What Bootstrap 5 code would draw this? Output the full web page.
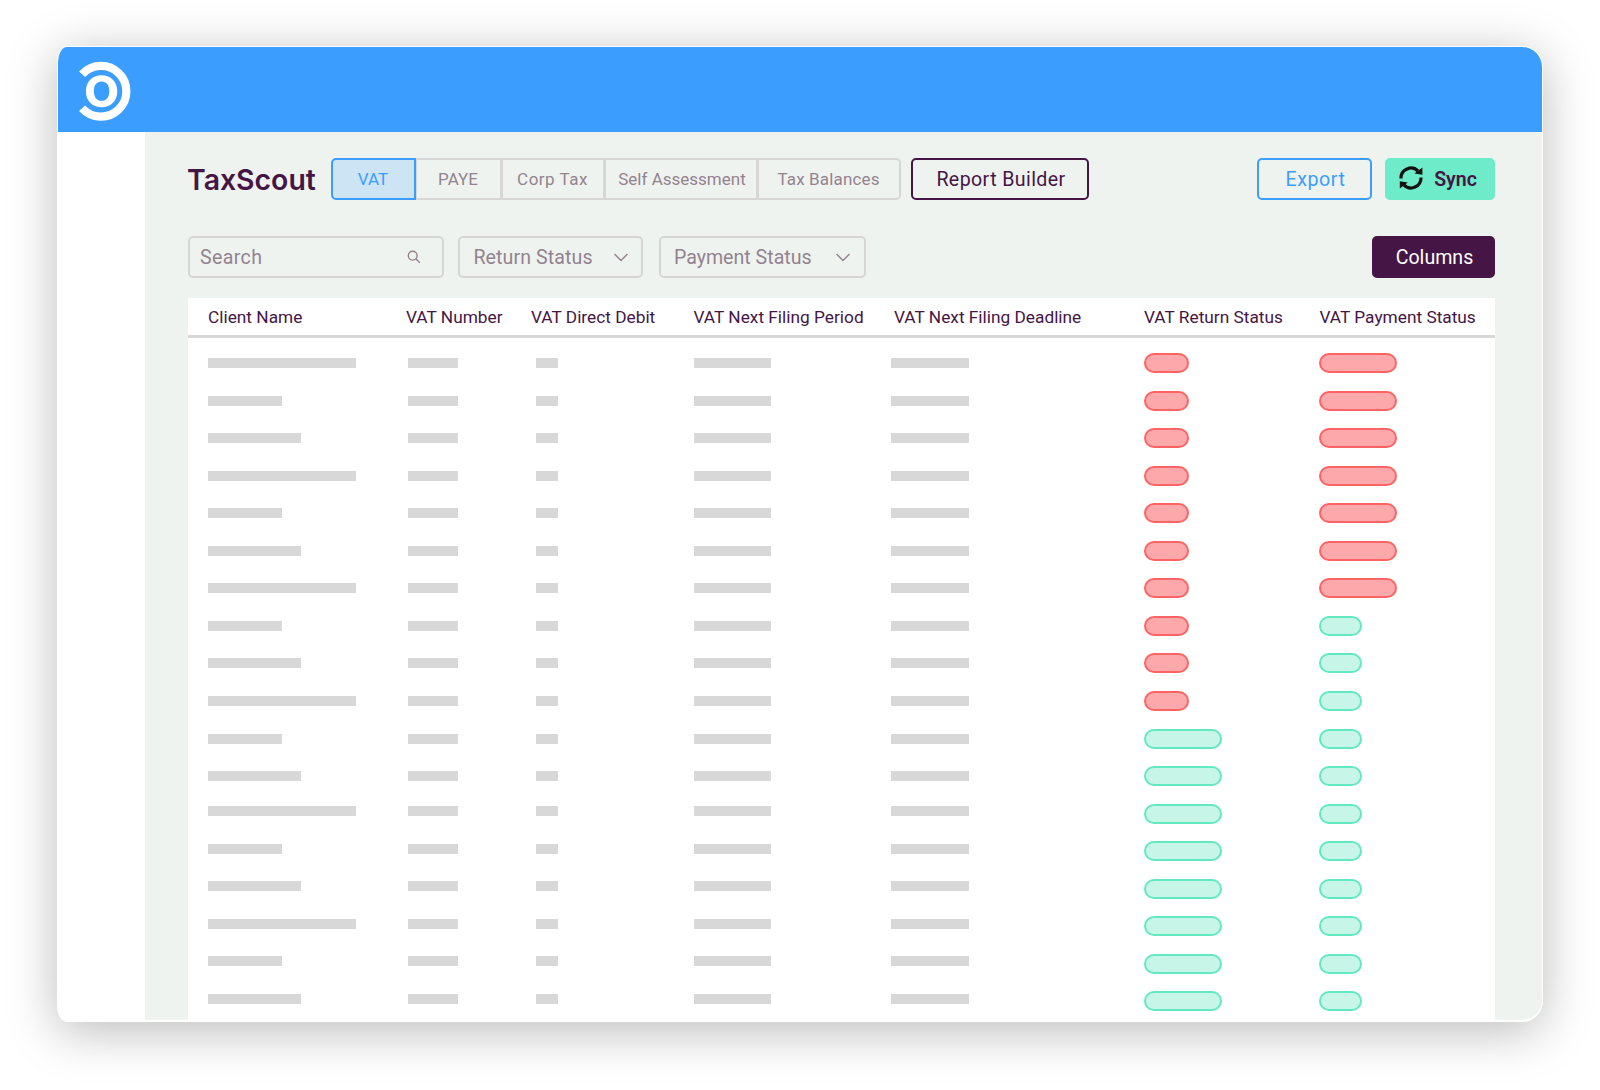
<!DOCTYPE html>
<html lang="en">
<head>
  <meta charset="UTF-8" />
  <meta name="viewport" content="width=device-width, initial-scale=1.0" />
  <title>TaxScout – VAT</title>
  <link href="https://cdn.jsdelivr.net/npm/bootstrap@5.3.3/dist/css/bootstrap.min.css" rel="stylesheet" />

  <style>
    body {
      background: #fff;
      font-family: Roboto, "Liberation Sans", sans-serif;
      color: #451645;
      padding: 46px 57px 0;
      height: 1090px;
      overflow: hidden;
    }

    .app-window {
      height: 976px;
      background: #fff;
      border: 1px solid #fff;
      border-bottom-width: 2px;
      border-radius: 10px 21px 21px 10px / 16px 21px 21px 16px;
      box-shadow: 0 9px 50px rgba(0, 0, 0, 0.27);
      overflow: hidden;
    }

    .app-header {
      height: 85px;
      flex: none;
      background: #3b9eff;
      padding: 2px 0 0 20px;
    }

    .app-sidebar {
      width: 87px;
      flex: none;
    }

    .app-main {
      background: #eff3f0;
      padding: 26px 47px 0 43px;
      min-width: 0;
    }

    .app-title {
      width: 142.5px;
      font-family: Inter, "Liberation Sans", sans-serif;
      font-size: 28.4px;
      font-weight: 600;
      line-height: 42px;
      padding-top: 1px;
      text-indent: -1px;
    }

    .toolbar-row {
      height: 42px;
    }

    .filter-row {
      margin-top: 36px;
    }

    .btn {
      --bs-btn-padding-x: 0;
      --bs-btn-padding-y: 0;
      --bs-btn-font-size: 19.6px;
      --bs-btn-line-height: 37px;
      --bs-btn-border-width: 2px;
      --bs-btn-border-radius: 5px;
      height: 42px;
    }

    .tax-tabs {
      width: 570px;
      margin-right: 10.5px;
    }

    .tax-tabs .btn {
      --bs-btn-font-size: 17px;
      --bs-btn-color: #93838f;
      --bs-btn-border-color: #d6d6d6;
      --bs-btn-line-height: 38px;
      flex: none;
    }

    .tax-tabs .btn.active {
      --bs-btn-active-color: #3b9eff;
      --bs-btn-active-bg: #cde4f5;
      --bs-btn-active-border-color: #3b9eff;
    }

    .tab-vat { width: 85px; }
    .tab-paye { width: 87px; }
    .tab-corp { width: 104px; letter-spacing: 0.5px; }
    .tax-tabs .tab-self { width: 154px; padding-left: 3px; }
    .tab-balances { width: 144px; letter-spacing: 0.15px; }

    .btn-report {
      --bs-btn-color: #451645;
      --bs-btn-border-color: #451645;
      width: 178px;
      padding-left: 2px;
      letter-spacing: 0.4px;
    }

    .btn-export {
      --bs-btn-color: #3b9eff;
      --bs-btn-border-color: #3b9eff;
      width: 115px;
      margin-right: 13px;
      padding-left: 2px;
      letter-spacing: 0.6px;
    }

    .btn-sync {
      --bs-btn-color: #451645;
      --bs-btn-bg: #6eebc9;
      --bs-btn-border-color: #6eebc9;
      --bs-btn-font-weight: 600;
      width: 110px;
    }

    .btn-sync svg {
      margin: 0 0 2px 4px;
    }

    .btn-columns {
      --bs-btn-color: #fff;
      --bs-btn-bg: #451645;
      --bs-btn-border-color: #451645;
      width: 123px;
      padding-left: 2px;
    }

    .filter-box {
      height: 42px;
      border: 2px solid #d6d6d6;
      border-radius: 5px;
      color: #93838f;
      font-size: 19.6px;
      line-height: 37px;
      padding-left: 13px;
    }

    .filter-search { width: 256px; padding: 0 21px 0 10px; margin-right: 14.4px; letter-spacing: 0.35px; }
    .filter-return { width: 185px; padding-right: 13px; margin-right: 15.5px; letter-spacing: 0.1px; }
    .filter-payment { width: 207px; padding-right: 14px; }

    .vat-table {
      margin-top: 20px;
      background: #fff;
      height: 730px;
    }

    .vat-head, .vat-row {
      display: grid;
      align-items: center;
      padding-left: 20px;
    }

    .vat-head {
      grid-template-columns: 198px 125px 162.5px 200.5px 250px 175.5px 1fr;
      height: 40px;
      padding-top: 2px;
      border-bottom: 3px solid #d8d8d8;
      font-size: 17.3px;
      line-height: 35px;
      white-space: nowrap;
    }

    .vat-body {
      padding-top: 6.3px;
    }

    .vat-row {
      grid-template-columns: 200px 128px 157.7px 197.6px 253px 175.2px 1fr;
      height: 37.55px;
    }

    .bar {
      height: 10px;
      background: #d8d8d8;
    }

    .bar-raised {
      margin-bottom: 5px;
    }

    .status-pill {
      height: 20px;
      border: 2px solid;
      border-radius: 10px;
    }

    .pill-red { background: #fda8aa; border-color: #ff6364; }
    .pill-green { background: #c7f6e9; border-color: #62e9c1; }
  </style>
</head>
<body>

  <div class="app-window d-flex flex-column">
    <!-- Header -->
    <header class="app-header d-flex align-items-center">
      <svg width="54" height="62" viewBox="0 0 54 62">
        <path d="M4.1 14.2A25.4 25.4 0 1 1 4.1 48.2" fill="none" stroke="#fff" stroke-width="8.2" />
        <path fill="#fff" fill-rule="evenodd" d="M23.6 15.2C33 15.2 39.3 21.8 39.3 31.2S33 47.2 23.6 47.2 7.9 40.6 7.9 31.2 14.2 15.2 23.6 15.2zM23.6 21.6C18.8 21.6 15.9 25 15.9 31.2S18.8 40.8 23.6 40.8 31.3 37.4 31.3 31.2 28.4 21.6 23.6 21.6z" />
      </svg>
    </header>

    <div class="d-flex flex-grow-1">
      <aside class="app-sidebar"></aside>

      <main class="app-main flex-grow-1">
        <!-- Tabs and actions -->
        <div class="toolbar-row d-flex">
          <h1 class="app-title mb-0">TaxScout</h1>
          <div class="btn-group tax-tabs">
            <button class="btn tab-vat active">VAT</button>
            <button class="btn tab-paye">PAYE</button>
            <button class="btn tab-corp">Corp Tax</button>
            <button class="btn tab-self">Self Assessment</button>
            <button class="btn tab-balances">Tax Balances</button>
          </div>
          <button class="btn btn-report">Report Builder</button>
          <button class="btn btn-export ms-auto">Export</button>
          <button class="btn btn-sync d-flex align-items-center justify-content-between ps-2 pe-3">
            <svg width="24" height="24" viewBox="0 0 24 24">
              <path d="M2 12.5A10 10 0 0 1 19 5M22 11.5A10 10 0 0 1 5 19" fill="none" stroke="#111" stroke-width="3.2" />
              <path d="M23.4 1.5v7.3l-8-1.4zM.8 22.5v-7.3l8 1.4z" fill="#111" />
            </svg>
            <span>Sync</span>
          </button>
        </div>

        <!-- Filters -->
        <div class="toolbar-row filter-row d-flex">
          <div class="filter-box filter-search d-flex justify-content-between align-items-center">
            <span>Search</span>
            <svg width="14" height="14" viewBox="0 0 14 14" fill="none" stroke="#93838f" stroke-width="1.4">
              <circle cx="5.7" cy="5.7" r="4.4" />
              <path d="M8.8 8.8l4 4" />
            </svg>
          </div>
          <div class="filter-box filter-return d-flex justify-content-between align-items-center">
            <span>Return Status</span>
            <svg width="14" height="9" viewBox="0 0 14 9" fill="none" stroke="#93838f" stroke-width="1.4">
              <path d="M.5 1L7 7.6 13.5 1" />
            </svg>
          </div>
          <div class="filter-box filter-payment d-flex justify-content-between align-items-center">
            <span>Payment Status</span>
            <svg width="14" height="9" viewBox="0 0 14 9" fill="none" stroke="#93838f" stroke-width="1.4">
              <path d="M.5 1L7 7.6 13.5 1" />
            </svg>
          </div>
          <button class="btn btn-columns ms-auto">Columns</button>
        </div>

        <!-- Table -->
        <div class="vat-table">
          <div class="vat-head">
            <div>Client Name</div>
            <div>VAT Number</div>
            <div>VAT Direct Debit</div>
            <div>VAT Next Filing Period</div>
            <div>VAT Next Filing Deadline</div>
            <div>VAT Return Status</div>
            <div>VAT Payment Status</div>
          </div>
          <div class="vat-body" id="vatBody"></div>
        </div>
      </main>
    </div>
  </div>

  <script src="https://cdn.jsdelivr.net/npm/bootstrap@5.3.3/dist/js/bootstrap.bundle.min.js"></script>
  <script>
    const nameWidths = [147.5, 73.5, 93];
    const otherWidths = [50, 22.4, 77.5, 77.5];
    const rowCount = 18;

    function pill(isRed, redWidth, greenWidth) {
      return `<div class="status-pill ${isRed ? "pill-red" : "pill-green"}" style="width: ${isRed ? redWidth : greenWidth}px"></div>`;
    }

    let rows = "";
    for (let i = 0; i < rowCount; i++) {
      // lower rows have their bars slightly above the pills
      const raised = i >= 12 ? " bar-raised" : "";
      const bars = [nameWidths[i % 3], ...otherWidths]
        .map(w => `<div class="bar${raised}" style="width: ${w}px"></div>`)
        .join("");
      rows += `<div class="vat-row">${bars}${pill(i < 10, 45, 77.5)}${pill(i < 7, 77.5, 42.5)}</div>`;
    }
    document.getElementById("vatBody").innerHTML = rows;
  </script>
</body>
</html>
